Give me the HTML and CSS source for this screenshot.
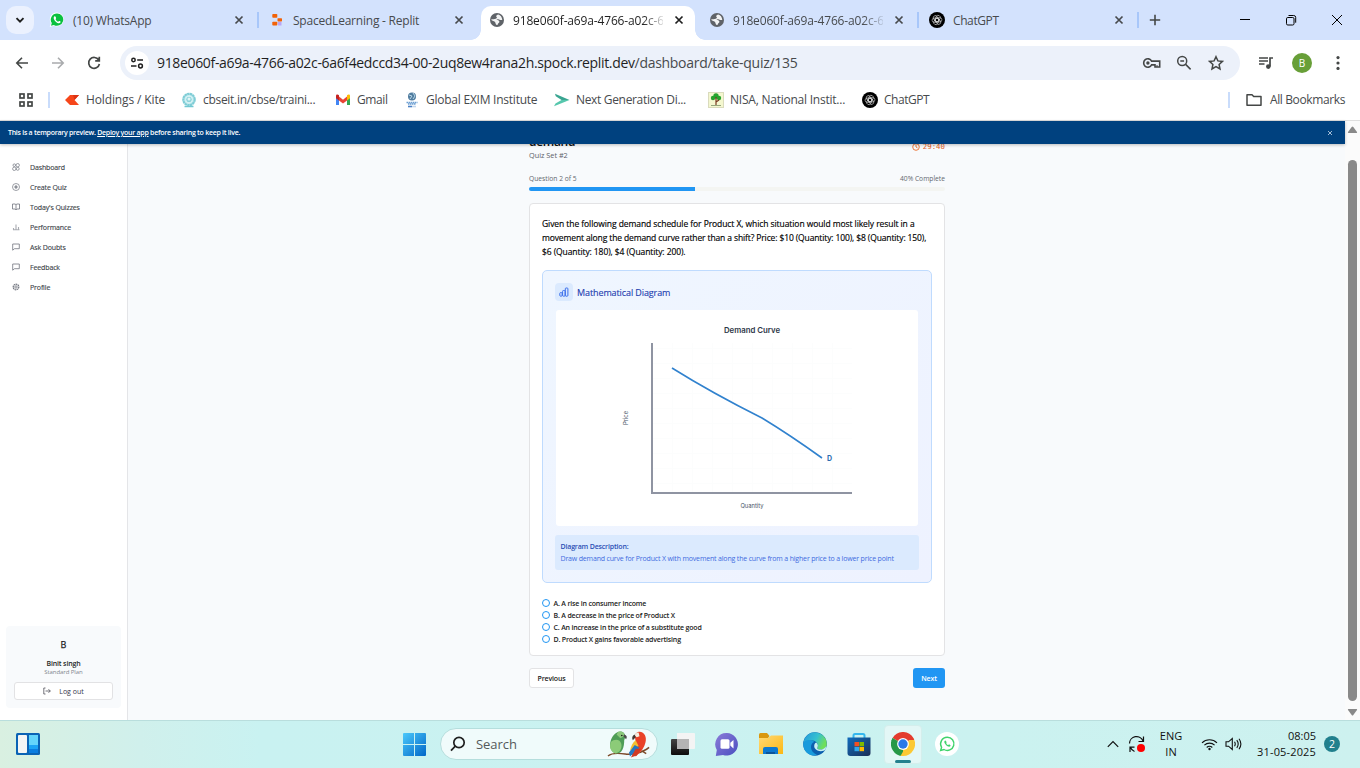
FILE: index.html
```html
<!DOCTYPE html>
<html lang="en">
<head>
<meta charset="utf-8">
<title>Take quiz</title>
<link rel="stylesheet" href="styles.css">
</head>
<body>
<svg class="defs" width="0" height="0">
  <defs>
    <linearGradient id="g-win" x1="0" y1="0" x2="1" y2="1"><stop offset="0" stop-color="#4cc9fb"/><stop offset="1" stop-color="#0067c8"/></linearGradient>
    <linearGradient id="g-chat" x1="0" y1="0" x2="1" y2="1"><stop offset="0" stop-color="#8b7bd8"/><stop offset="1" stop-color="#4a4fc0"/></linearGradient>
    <linearGradient id="g-folder" x1="0" y1="0" x2="1" y2="1"><stop offset="0" stop-color="#ffd976"/><stop offset="1" stop-color="#fcb813"/></linearGradient>
    <linearGradient id="g-edge" x1="0" y1="0" x2="1" y2=".4"><stop offset="0" stop-color="#2397dc"/><stop offset=".6" stop-color="#35c1d0"/><stop offset="1" stop-color="#6fdf5c"/></linearGradient>
    <linearGradient id="g-store" x1="0" y1="0" x2="1" y2="1"><stop offset="0" stop-color="#0f6cbd"/><stop offset="1" stop-color="#1d2f55"/></linearGradient>
    <linearGradient id="g-dark" x1="0" y1="0" x2="0" y2="1"><stop offset="0" stop-color="#444"/><stop offset="1" stop-color="#0c0c0c"/></linearGradient>
    <symbol id="close" viewBox="0 0 16 16"><path d="M4.500 4.500l7 7m0-7l-7 7" fill="none" stroke="currentColor" stroke-width="1.700"/></symbol>
    <symbol id="globe" viewBox="0 0 16 16"><circle cx="8" cy="8" r="7" fill="#5f6368"/><path d="M9.300 2.400C7 3 6.600 4.600 8 5.600c-.3 1.400-1.800 1.200-3.600 1.700H2.300c0 1.900 2.500 1.400 3.700 2.600.8 1 .2 2 1.700 3.200 1.400.1.800-1.600 2-2.200.9-.5.9-1.400.2-2.100-.8-.7-1.900-.6-2.500-1.200 1.500-.5 2.700-.4 3.600.3h2.300C13 5 11.500 2.900 9.300 2.400z" fill="#fff" opacity=".92"/></symbol>
    <symbol id="gpt" viewBox="0 0 16 16"><circle cx="8" cy="8" r="8" fill="#000"/><g fill="none" stroke="#ddd" stroke-width=".6"><rect x="5.700" y="3.100" width="4.200" height="6.600" rx="2.100" transform="rotate(-30 8 8)"/><rect x="5.700" y="3.100" width="4.200" height="6.600" rx="2.100" transform="rotate(30 8 8)"/><rect x="5.700" y="3.100" width="4.200" height="6.600" rx="2.100" transform="rotate(90 8 8)"/><rect x="5.700" y="3.100" width="4.200" height="6.600" rx="2.100" transform="rotate(150 8 8)"/><rect x="5.700" y="3.100" width="4.200" height="6.600" rx="2.100" transform="rotate(210 8 8)"/><rect x="5.700" y="3.100" width="4.200" height="6.600" rx="2.100" transform="rotate(270 8 8)"/></g></symbol>
    <symbol id="comment" viewBox="0 0 8 8"><path d="M.7 1h6.600v4.700H2.500L.7 7.200z" fill="none" stroke="currentColor" stroke-width=".8"/></symbol>
  </defs>
</svg>

<header class="tabstrip">
  <button class="tab-search"><svg width="12" height="12" viewBox="0 0 12 12"><path d="M2.500 4.200L6 7.700l3.500-3.500" fill="none" stroke="#1f1f1f" stroke-width="1.900"/></svg></button>
  <div class="tab">
    <svg class="fav" viewBox="0 0 16 16"><path d="M8 .5a7 7 0 1 1-3.400 13.300L.7 15l1.200-3.800A7 7 0 0 1 8 .5z" fill="#fff"/><path d="M8 1.400a6.200 6.200 0 1 1-3.200 11.500l-2.800.8.800-2.700A6.200 6.200 0 0 1 8 1.400z" fill="#0ac13f"/><path d="M5.400 4.300c-1.600 1.600-.1 4 1.500 5.500s3.400 2.200 4.500.8c.5-.7.200-1-.9-1.500-.8-.3-.8.900-1.500.6C7.800 9.100 7 8.300 6.600 7.200c-.1-.4.700-.7.500-1.200-.4-1.400-.7-2.200-1.700-1.700z" fill="#fff"/></svg>
    <span class="tab-title">(10) WhatsApp</span><svg class="x"><use href="#close"/></svg><i class="sep"></i>
  </div>
  <div class="tab">
    <svg class="fav" viewBox="0 0 16 16"><rect x="3.300" y="2" width="5" height="3.800" rx=".8" fill="#f26207"/><rect x="8.500" y="6.200" width="4.500" height="3.200" rx=".6" fill="#f26207"/><rect x="3.300" y="9.800" width="5" height="3.800" rx=".8" fill="#f26207"/><rect x="9" y="10" width="3.500" height="3.500" fill="#b9a5f5"/></svg>
    <span class="tab-title">SpacedLearning - Replit</span><svg class="x"><use href="#close"/></svg>
  </div>
  <div class="tab active">
    <svg class="fav"><use href="#globe"/></svg>
    <span class="tab-title hash">918e060f-a69a-4766-a02c-6</span><svg class="x"><use href="#close"/></svg>
  </div>
  <div class="tab">
    <svg class="fav"><use href="#globe"/></svg>
    <span class="tab-title hash">918e060f-a69a-4766-a02c-6</span><svg class="x"><use href="#close"/></svg><i class="sep"></i>
  </div>
  <div class="tab">
    <svg class="fav"><use href="#gpt"/></svg>
    <span class="tab-title short">ChatGPT</span><svg class="x"><use href="#close"/></svg><i class="sep"></i>
  </div>
  <svg class="newtab" width="12" height="12" viewBox="0 0 12 12"><path d="M6 .8v10.400M.8 6h10.400" stroke="#444746" stroke-width="1.600"/></svg>
  <div class="wincontrols">
    <svg width="12" height="12" viewBox="0 0 12 12"><path d="M1 5.500h10" stroke="#000"/></svg>
    <svg width="12" height="12" viewBox="0 0 12 12" fill="none" stroke="#000"><rect x="1.500" y="3.500" width="7.500" height="7.500" rx="1.300"/><path d="M3.500 1.500h5.200a2 2 0 0 1 2 2v5.200"/></svg>
    <svg width="12" height="12" viewBox="0 0 12 12"><path d="M1 1l10 10M11 1L1 11" stroke="#000"/></svg>
  </div>
</header>

<section class="toolbar">
  <div class="nav-icons">
    <svg width="16" height="16" viewBox="0 0 16 16" fill="none" stroke="#444746" stroke-width="1.600"><path d="M14 8H3M8 2.800L2.800 8 8 13.200"/></svg>
    <svg width="16" height="16" viewBox="0 0 16 16" fill="none" stroke="#a9abad" stroke-width="1.600"><path d="M2 8h11M8 2.800L13.200 8 8 13.200"/></svg>
    <svg width="16" height="16" viewBox="0 0 16 16" fill="none" stroke="#444746" stroke-width="1.700"><path d="M12.700 5A5.400 5.400 0 1 0 13.400 9M13.300 1.800v4.100H9.200"/></svg>
  </div>
  <div class="omnibox">
    <span class="site"><svg width="14" height="14" viewBox="0 0 14 14" fill="none" stroke="#1f1f1f" stroke-width="1.500"><circle cx="3.500" cy="4" r="1.700"/><path d="M7.200 4H13M1 10h5.500"/><circle cx="10.500" cy="10" r="1.900"/></svg></span>
    <span class="url"><span class="host">918e060f-a69a-4766-a02c-6a6f4edccd34-00-2uq8ew4rana2h.spock.replit.dev</span><span class="path">/dashboard/take-quiz/135</span></span>
    <div class="omni-icons">
      <svg class="key" width="20" height="16" viewBox="0 0 20 16" fill="none" stroke="#444746" stroke-width="1.600"><path d="M9.600 6.100A4.200 4.200 0 1 0 9.600 9.900H13V12h4.700V6.100z"/><circle cx="5.900" cy="8" r="1.700" fill="#444746" stroke="none"/><path d="M15 10v2" stroke-width="1"/></svg>
      <svg width="16" height="16" viewBox="0 0 16 16" fill="none" stroke="#444746" stroke-width="1.500"><circle cx="6.200" cy="6" r="4.500"/><path d="M4.300 6h3.800M9.600 9.400l5 5"/></svg>
      <svg width="16" height="16" viewBox="0 0 16 16"><path d="M8 1.700l1.900 4.200 4.600.5-3.400 3.100.9 4.500-4-2.300L4 14l.9-4.500-3.400-3.100 4.600-.5z" fill="none" stroke="#444746" stroke-width="1.500"/></svg>
    </div>
  </div>
  <svg class="media" width="16" height="14" viewBox="0 0 16 14"><path d="M1 2h9M1 5h9M1 8h5.500" stroke="#444746" stroke-width="1.500"/><path d="M12 10.500V2h3" fill="none" stroke="#444746" stroke-width="1.700"/><circle cx="10.300" cy="10.600" r="2.300" fill="#444746"/></svg>
  <span class="avatar">B</span>
  <svg class="kebab" width="4" height="16" viewBox="0 0 4 16" fill="#444746"><circle cx="2" cy="2.600" r="1.600"/><circle cx="2" cy="8" r="1.600"/><circle cx="2" cy="13.400" r="1.600"/></svg>
</section>

<nav class="bookmarks">
  <svg class="apps" width="16" height="16" viewBox="0 0 16 16" fill="none" stroke="#444746" stroke-width="1.700"><rect x="2" y="2" width="4" height="4"/><rect x="10" y="2" width="4" height="4"/><rect x="2" y="10" width="4" height="4"/><rect x="10" y="10" width="4" height="4"/></svg>
  <i class="bar"></i>
  <a class="bm b1"><svg viewBox="0 0 16 16"><path d="M1 8l5-5h9L10.500 8l4.500 5H6z" fill="#f6461a"/><path d="M10.500 8L15 3H9z" fill="#dc3313"/></svg><span>Holdings / Kite</span></a>
  <a class="bm b2"><svg viewBox="0 0 16 16"><circle cx="8" cy="7.500" r="5.700" fill="#c9edf0" stroke="#7fcdd6" stroke-width="2.200" stroke-dasharray="2.400 .3"/><circle cx="8" cy="7.500" r="3.300" fill="#8ed3db" stroke="#e9fafb" stroke-width=".8"/><circle cx="8" cy="7" r="1.500" fill="#e2f6f7"/><path d="M3.500 14.500h9" stroke="#72c8d2" stroke-width="1.500"/></svg><span>cbseit.in/cbse/traini...</span></a>
  <a class="bm b3"><svg viewBox="0 0 16 16"><path d="M1 4v9h3V7z" fill="#4285f4"/><path d="M15 4v9h-3V7z" fill="#34a853"/><path d="M4 4.500l4 3.200 4-3.200v4L8 11.500 4 8.500z" fill="#ea4335"/><path d="M1 4c0-1.500 1.700-1.900 3-.7v5.200L1 6.300z" fill="#c5221f"/><path d="M15 4c0-1.500-1.700-1.900-3-.7v5.200l3-2.200z" fill="#fbbc04"/></svg><span>Gmail</span></a>
  <a class="bm b4"><svg viewBox="0 0 16 16"><circle cx="8" cy="4.500" r="4" fill="#507c9f"/><path d="M5 3l3 1-2 3m3-6l2 3-2 3" stroke="#b9d7e8" fill="none"/><path d="M2.500 10.500h11M4 12h8" stroke="#6c9fd2" stroke-width="1.400" stroke-dasharray="1.500 .5"/><path d="M4 14.500h4" stroke="#4a80c4" stroke-width="1.600"/><path d="M8 14.500h4" stroke="#c3d6ec" stroke-width="1.600"/></svg><span>Global EXIM Institute</span></a>
  <a class="bm b5"><svg viewBox="0 0 16 16"><path d="M1 1.800L15.500 8H7.500L1.800 4.300z" fill="#3aa591"/><path d="M15.500 8L0 14.200l1.500-2.700L7.500 8z" fill="#56c7ad"/></svg><span>Next Generation Di...</span></a>
  <a class="bm b6"><svg viewBox="0 0 16 16"><rect x=".5" y=".5" width="15" height="15" fill="#f4f7cf" stroke="#dadbbd"/><g fill="#25a32d"><circle cx="8" cy="4" r="2.700"/><circle cx="5" cy="6" r="2.200"/><circle cx="11" cy="6" r="2.200"/></g><path d="M8 5v8M8 10l3-2" stroke="#7b3a22" stroke-width="1.200"/><path d="M3 13.500h10" stroke="#6b8156" stroke-width=".7"/></svg><span>NISA, National Instit...</span></a>
  <a class="bm b7"><svg><use href="#gpt"/></svg><span>ChatGPT</span></a>
  <div class="all"><i class="bar"></i><svg width="18" height="16" viewBox="0 0 18 16"><path d="M2 2.800h5l1.700 1.800H16v8.600H2z" fill="none" stroke="#444746" stroke-width="1.500" stroke-linejoin="round"/></svg><span>All Bookmarks</span></div>
</nav>

<div class="viewport">
  <div class="page">
    <div class="banner"><span>This is a temporary preview. <u>Deploy your app</u> before sharing to keep it live.</span><svg width="6" height="6" viewBox="0 0 6 6"><path d="M1 1l4 4M5 1L1 5" stroke="#cddbea" stroke-width=".8"/></svg></div>
    <div class="app">
      <aside class="sidebar">
        <ul>
          <li><svg viewBox="0 0 8 8" fill="none" stroke="currentColor" stroke-width=".7"><circle cx="2.300" cy="2.200" r="1.300"/><circle cx="5.700" cy="2.200" r="1.700"/><circle cx="2.300" cy="5.800" r="1.700"/><circle cx="5.700" cy="5.800" r="1.500"/></svg><span>Dashboard</span></li>
          <li><svg viewBox="0 0 8 8" fill="none" stroke="currentColor" stroke-width=".7"><circle cx="4" cy="4" r="3.500"/><path d="M4 2.200v3.600M2.200 4h3.600" stroke-width="1.200"/></svg><span>Create Quiz</span></li>
          <li><svg viewBox="0 0 8 8" fill="none" stroke="currentColor" stroke-width=".8"><path d="M4 1.600v5.200M.5 1H3l1 .6L5 1h2.500v5H5l-1 .8L3 6H.5z"/></svg><span>Today's Quizzes</span></li>
          <li><svg viewBox="0 0 8 8" stroke="currentColor" opacity=".6"><path d="M1.500 7V5M4 7V1.500M6.500 7V4M1 6.800h6.500" stroke-width="1.100"/></svg><span>Performance</span></li>
          <li><svg><use href="#comment"/></svg><span>Ask Doubts</span></li>
          <li><svg><use href="#comment"/></svg><span>Feedback</span></li>
          <li><svg viewBox="0 0 8 8" fill="none" stroke="currentColor"><circle cx="4" cy="4" r="2.800" stroke-width="1.200" stroke-dasharray="1.600 .5"/><circle cx="4" cy="4" r="1.200" stroke-width=".8"/></svg><span>Profile</span></li>
        </ul>
        <div class="user">
          <b class="initial">B</b>
          <b class="name">Binit singh</b>
          <span class="plan">Standard Plan</span>
          <button class="logout"><svg width="8" height="8" viewBox="0 0 8 8" fill="none" stroke="#52525b" stroke-width=".8"><path d="M2.500 1H.8v6h1.700M2.500 4h4.800M5.500 2.200L7.300 4 5.500 5.800"/></svg><span>Log out</span></button>
        </div>
      </aside>
      <main class="quiz">
        <div class="col">
          <div class="quiz-head">
            <h1>demand</h1>
            <div class="timer"><svg width="8" height="8" viewBox="0 0 8 8" fill="none" stroke="#ea580c" stroke-width=".8"><circle cx="4" cy="4" r="3.300"/><path d="M4 1.800V4l1.500.9"/></svg><span>29:40</span></div>
          </div>
          <p class="set">Quiz Set #2</p>
          <div class="meta"><span>Question 2 of 5</span><span>40% Complete</span></div>
          <div class="progress"><div style="width:40%"></div></div>
          <section class="card">
            <h2><span class="q1">Given the following demand schedule for Product X, which situation would most likely result in a</span><span class="q2">movement along the demand curve rather than a shift? Price: $10 (Quantity: 100), $8 (Quantity: 150),</span><span class="q3">$6 (Quantity: 180), $4 (Quantity: 200).</span></h2>
            <div class="diagram">
              <div class="diagram-head"><i><svg width="10" height="10" viewBox="0 0 10 10" fill="none" stroke="#3b6fec" stroke-width="1"><rect x=".8" y="5.600" width="2.300" height="3.600" rx=".8"/><rect x="3.600" y="3.500" width="2.500" height="5.700" rx=".8"/><rect x="6.300" y="1" width="2.600" height="8.200" rx=".8"/></svg></i><span>Mathematical Diagram</span></div>
              <svg class="chart" width="362" height="216" viewBox="0 0 362 216">
                <path d="M116.500 33v150M136.500 33v150M156.500 33v150M176.500 33v150M196.500 33v150M216.500 33v150M236.500 33v150M256.500 33v150M276.500 33v150M96 38.500h200M96 53.500h200M96 68.500h200M96 83.500h200M96 98.500h200M96 113.500h200M96 128.500h200M96 143.500h200M96 158.500h200M96 173.500h200" stroke="#fcfdfd" fill="none"/>
                <path d="M96 33v150h200" fill="none" stroke="#8f94a2" stroke-width="2"/>
                <path d="M116 58Q156 83 206 108Q234 125 266 148" fill="none" stroke="#3182ce" stroke-width="1.600"/>
                <text x="196" y="22.500" text-anchor="middle" class="c-title">Demand Curve</text>
                <text x="271" y="151.300" class="c-d">D</text>
                <text x="196" y="198" text-anchor="middle" class="c-axis">Quantity</text>
                <text x="71.500" y="108" text-anchor="middle" class="c-axis" transform="rotate(-90 71.500 108)">Price</text>
              </svg>
              <div class="desc"><b>Diagram Description:</b><span>Draw demand curve for Product X with movement along the curve from a higher price to a lower price point</span></div>
            </div>
            <ul class="options">
              <li><i></i><span>A. A rise in consumer income</span></li>
              <li><i></i><span>B. A decrease in the price of Product X</span></li>
              <li><i></i><span>C. An increase in the price of a substitute good</span></li>
              <li><i></i><span>D. Product X gains favorable advertising</span></li>
            </ul>
          </section>
          <div class="actions"><button class="prev">Previous</button><button class="next">Next</button></div>
        </div>
      </main>
    </div>
  </div>
  <div class="scrollbar"><svg width="11" height="8" viewBox="0 0 11 8"><path d="M4.700 1Q5.500 0 6.300 1L10 6q.5 1-.5 1h-8Q.5 7 1 6z" fill="#898989"/></svg><i></i><svg width="11" height="8" viewBox="0 0 11 8"><path d="M4.700 7Q5.500 8 6.300 7L10 2q.5-1-.5-1h-8Q.5 1 1 2z" fill="#898989"/></svg></div>
</div>

<footer class="taskbar">
  <svg class="widgets" width="24" height="22" viewBox="0 0 24 22"><rect width="24" height="22" rx="1.500" fill="#0b63b5"/><rect x="2" y="2" width="9" height="18" rx="1" fill="#f5f5f5"/><path d="M13 2h9v10h-9z" fill="#63d5fb"/><path d="M13 12h9v4h-9z" fill="#1ba4f5"/><path d="M13 16h9v4h-9z" fill="#0a7de0"/></svg>
  <div class="center">
    <svg class="win" width="23" height="23" viewBox="0 0 23 23" fill="url(#g-win)"><path d="M1 0h10v11H0V1q0-1 1-1zM12 0h10q1 0 1 1v10H12zM0 12h11v11H1q-1 0-1-1zM12 12h11v10q0 1-1 1H12z"/></svg>
    <div class="search">
      <svg width="16" height="16" viewBox="0 0 16 16" fill="none" stroke="#1f1f1f" stroke-width="1.700"><circle cx="9" cy="6.500" r="5.200"/><path d="M5.300 10.200L1 14.600"/></svg>
      <span>Search</span>
      <svg class="parrots" width="44" height="28" viewBox="0 0 46 28"><path d="M1 26.500c5-4 12-3 18-2s18-1 25-7M36 21l5 3" fill="none" stroke="#7c4a2a" stroke-width="1.500"/><path d="M4 10C6 4 11 0 15 1c4 1 5 5 3 9 0 7-2 14-8 14-6-1-8-8-6-14z" fill="#4e9d56"/><path d="M4 12c4-4 10-3 11 2s-2 9-6 10c-5-2-7-6-5-12z" fill="#8ccb78"/><path d="M12 1c5 0 7 2 6 5l-4 2-4-4z" fill="#8bc97b"/><path d="M18 4q4 1 2 5l-3-3z" fill="#4c4b4b"/><circle cx="15.500" cy="5" r=".8" fill="#111"/><path d="M29 6c0-4 5-6 8-4 5 3 4 10 2 14-2 5-6 8-9 11l-2-5c3-6 2-11 1-16z" fill="#e94228"/><path d="M30 10c-3 2-5 6-6 11l9-5z" fill="#f5bf32"/><path d="M29 15l-6 8 1 4 10-9z" fill="#2378c4"/><path d="M30 19l-5 9 6-2 5-7z" fill="#cf3a25"/><path d="M29 5q1-3 4-3l1 4-3 1z" fill="#f5efe2"/><path d="M29 4q-4 2-2 6l3-3z" fill="#423832"/></svg>
    </div>
    <div class="dock">
      <svg viewBox="0 0 24 24"><rect x="0" y="7" width="18" height="16" rx="1" fill="url(#g-dark)"/><path d="M6 1h17q1 0 1 1v14q0 1-1 1H6z" fill="#f4f4f4"/><path d="M6 7h12v10H6z" fill="#b4b4b4"/></svg>
      <svg viewBox="0 0 24 24"><path d="M12 1a11.300 11.300 0 1 1-4 22L.8 24l1-6A11.300 11.300 0 0 1 12 1z" fill="url(#g-chat)"/><rect x="5.500" y="7.300" width="9" height="9.500" rx="1.500" fill="#fff"/><path d="M15.300 10.700L18.500 8v8.400l-3.200-2.800z" fill="#fff"/></svg>
      <svg viewBox="0 0 24 24"><path d="M0 2.500Q0 1 1.500 1H8l2.500 3-2 3H0z" fill="#d9970e"/><path d="M0 6h9l3-2.500h12V22H0z" fill="url(#g-folder)"/><path d="M4 22v-5q0-2 2-2h11q2 0 2 2v5z" fill="#0b79d0"/><path d="M7 20h9v2H7z" fill="#0a559b"/></svg>
      <svg viewBox="0 0 24 24"><circle cx="12" cy="12" r="11.800" fill="#0c5fae"/><path d="M.4 10A11.800 11.800 0 0 1 23.800 12c0 4-4 6-7.500 5.500-2-.3-2.600-1-1.700-2.500 1.800-5-5-8.500-9.500-5.500C2.500 11.200 1 11 .4 10z" fill="url(#g-edge)"/><path d="M.2 12C1 7 9 7 11.500 10 6.500 11 6.500 20 14 22.500 8 26 0 20 .2 12z" fill="#199bdc"/><path d="M14.600 15c-.9 1.500-.3 2.200 1.700 2.500 2.700.3 5-.5 7-3.300l-.7 3.600c-2 1.700-8 2.700-11-1.800-1-2.500 0-5 1.500-5.500q2.500 2 1.500 4.500z" fill="#c9f1f3"/></svg>
      <svg viewBox="0 0 24 24"><path d="M6.500 7V3.500Q6.500 2 8 2h8q1.500 0 1.500 1.500V7" fill="none" stroke="#35b7ee" stroke-width="2"/><path d="M.5 5.500h23V21q0 3-3 3h-17q-3 0-3-3z" fill="url(#g-store)"/><path d="M7.500 10H12v4.300H7.500z" fill="#f25022"/><path d="M12.500 10H17v4.300h-4.500z" fill="#7fba00"/><path d="M7.500 15H12v4.200H7.500z" fill="#2ea8ec"/><path d="M12.500 15H17v4.200h-4.500z" fill="#ffb900"/></svg>
      <span class="current"><svg viewBox="0 0 24 24"><path d="M12 12L1.600 6A12 12 0 0 1 22.400 6z" fill="#e33b2e"/><path d="M12 12L22.400 6A12 12 0 0 1 12 24z" fill="#fcc934"/><path d="M12 12v12A12 12 0 0 1 1.600 6z" fill="#279847"/><path d="M12 6h10.400l.8 2H12z" fill="#e33b2e"/><path d="M17.200 15L12 24h-2.500l4-7z" fill="#fcc934"/><path d="M6.800 15L1.600 6l-1 2.500 4 7z" fill="#279847"/><circle cx="12" cy="12" r="5.900" fill="#fff"/><circle cx="12" cy="12" r="4.700" fill="#2a78e8"/></svg><i></i></span>
      <svg viewBox="0 0 24 24"><circle cx="12" cy="12" r="12" fill="#fff"/><path d="M12.300 5.200a6.600 6.600 0 1 1-3.300 12.300l-3.400 1 1-3.200A6.600 6.600 0 0 1 12.300 5.200z" fill="none" stroke="#3fd36b" stroke-width="1.400"/><path d="M10 8.500c-1.500 1-.5 3 1 4.500s3.400 2.500 4.500 1c.5-.9-1.500-1.800-2-1.300-.7.800-2.400-.7-2.100-1.700.5-.7-.4-2.600-1.400-2.500z" fill="#3fd36b"/></svg>
    </div>
  </div>
  <div class="tray">
    <svg class="chev" width="12" height="8" viewBox="0 0 12 8"><path d="M.8 6.800L6 1.600l5.200 5.200" fill="none" stroke="#111" stroke-width="1.200"/></svg>
    <svg class="sync" width="18" height="18" viewBox="0 0 18 18" fill="none" stroke="#111" stroke-width="1.200"><path d="M1.500 8.500A7 7 0 0 1 15 6M15.500 1.500V6.500H10.500M6.500 16.500A7 7 0 0 1 2.500 12.500M2 17v-4.800h4.500"/><circle cx="13" cy="13" r="4" fill="#f00" stroke="none"/></svg>
    <span class="lang"><span>ENG</span><span>IN</span></span>
    <svg class="wifi" width="17" height="13" viewBox="0 0 17 13" fill="none" stroke="#111" stroke-width="1.100"><path d="M1 4.800a10.600 10.600 0 0 1 15 0M3.400 7.200a7.200 7.200 0 0 1 10.200 0M5.700 9.500a4 4 0 0 1 5.600 0"/><circle cx="8.500" cy="11" r="1.200" fill="#111" stroke="none"/></svg>
    <svg class="vol" width="17" height="14" viewBox="0 0 17 14" fill="none" stroke="#111" stroke-width="1.100"><path d="M1 4.800h2.500L7.300 1.500v11L3.500 9.200H1zM9.500 4.800q1.500 2.200 0 4.400M11.800 3.200q2.800 3.800 0 7.600M14 1.800q3.800 5.200 0 10.400"/></svg>
    <span class="clock"><span>08:05</span><span class="date">31-05-2025</span></span>
    <span class="count">2</span>
  </div>
</footer>
</body>
</html>
```
FILE: styles.css
```css
* { box-sizing: border-box; margin: 0; padding: 0; }
body { width: 1360px; height: 768px; overflow: hidden; display: flex; flex-direction: column; font-family: "Open Sans", "Noto Sans", sans-serif; background: #fff; color: #1f1f1f; }
ul { list-style: none; }
svg { display: block; flex: none; }
span, b, a { white-space: nowrap; }
button { font-family: inherit; }
.defs { position: absolute; }

/* tab strip */
.tabstrip { height: 40px; flex: none; background: #d3e2fd; display: flex; align-items: center; padding-left: 6px; }
.tab-search { width: 28px; height: 28px; border: 0; border-radius: 10px; background: #ebf1fe; display: flex; align-items: center; justify-content: center; margin-right: 7px; }
.tab { width: 220px; height: 40px; display: flex; align-items: center; padding-left: 7px; flex: none; }
.tab .fav { width: 16px; height: 16px; margin: 0 8px 0 1px; }
.tab-title { width: 150px; font-size: 12px; line-height: 18px; padding-top: 1px; color: #474a4d; margin-right: 8px; letter-spacing: -.22px; }
.short { letter-spacing: -.4px; }
.hash { letter-spacing: -.16px; -webkit-mask-image: linear-gradient(90deg, #000 130px, rgba(0,0,0,.15) 150px); mask-image: linear-gradient(90deg, #000 130px, rgba(0,0,0,.15) 150px); }
.x { width: 16px; height: 16px; color: #474a4d; }
.sep { width: 2px; height: 16px; background: #a8c7fa; margin-left: 10px; }
.tab.active { width: 214px; height: 34px; margin: 6px 6px 0 0; background: #fff; border-radius: 10px 10px 0 0; position: relative; padding-bottom: 6px; }
.tab.active::before, .tab.active::after { content: ""; position: absolute; bottom: 0; width: 10px; height: 10px; }
.tab.active::before { left: -10px; background: radial-gradient(circle at 0 0, transparent 9.500px, #fff 10px); }
.tab.active::after { right: -10px; background: radial-gradient(circle at 100% 0, transparent 9.500px, #fff 10px); }
.tab.active .tab-title, .tab.active .x { color: #1f1f1f; }
.newtab { margin-left: 8px; }
.wincontrols { margin-left: auto; display: flex; gap: 34px; padding-right: 17px; }

/* toolbar */
.toolbar { height: 46px; flex: none; display: flex; align-items: center; background: #fff; }
.nav-icons { display: flex; gap: 20px; padding-left: 14px; width: 120px; }
.omnibox { width: 1120px; height: 34px; border-radius: 17px; background: #ecf1fa; display: flex; align-items: center; padding-left: 5px; flex: none; }
.site { width: 24px; height: 24px; border-radius: 12px; background: #fff; display: flex; align-items: center; justify-content: center; margin-right: 8px; }
.url { font-size: 14px; color: #474a4d; padding-bottom: 2px; }
.host { color: #1f1f1f; letter-spacing: -.34px; }
.path { letter-spacing: -.29px; }
.omni-icons { margin-left: auto; display: flex; gap: 16px; align-items: center; padding-right: 16px; }
.key { margin-right: -2px; }
.media { margin-left: 18px; }
.avatar { width: 20px; height: 20px; border-radius: 10px; background: #689f38; color: #fff; font-size: 10px; line-height: 20px; text-align: center; margin-left: 18px; }
.kebab { margin-left: 24px; }

/* bookmarks */
.bookmarks { height: 35px; flex: none; display: flex; align-items: center; padding: 0 15px 7px 18px; border-bottom: 1px solid #dfdfdf; font-size: 12px; color: #474a4d; }
.bookmarks .bar { width: 2px; height: 16px; background: #c9dcfb; }
.apps { margin-right: 14px; }
.bm { display: flex; align-items: center; gap: 6px; margin-left: 16px; height: 18px; }
.bm svg { width: 16px; height: 16px; }
.bm span { line-height: 18px; }
.b1 { width: 101px; margin-left: 14px; letter-spacing: -.13px; }
.b2 { width: 138px; letter-spacing: -.3px; }
.b3 { width: 53px; letter-spacing: -.4px; }
.b4 { width: 134px; letter-spacing: -.24px; }
.b5 { width: 138px; letter-spacing: -.33px; }
.b6 { width: 138px; letter-spacing: -.23px; }
.b7 { letter-spacing: -.45px; }
.all { margin-left: auto; display: flex; align-items: center; letter-spacing: -.38px; }
.all svg { margin: 0 7px 0 15px; }

/* viewport */
.viewport { height: 599px; flex: none; display: flex; }
.page { width: 1345px; height: 599px; display: flex; flex-direction: column; background: #f8fafc; }
.banner { height: 23px; flex: none; background: #00417f; color: #fff; font-size: 7px; font-weight: 600; display: flex; align-items: center; justify-content: space-between; padding: 0 12px 0 8px; box-shadow: 0 1px 3px rgba(0,0,0,.25); position: relative; z-index: 2; letter-spacing: -.27px; }
.app { flex: 1; min-height: 0; display: flex; overflow: hidden; }
.sidebar { width: 128px; background: #fff; border-right: 1px solid #e4e5e8; padding: 13px 6px 12px; display: flex; flex-direction: column; justify-content: space-between; }
.sidebar li { height: 20px; display: flex; align-items: center; gap: 10px; padding-left: 6px; font-size: 7px; font-weight: 500; color: #3a3f47; letter-spacing: -.13px; -webkit-text-stroke: .12px currentColor; }
.sidebar li svg { width: 8px; height: 8px; color: #71757f; }
.user { height: 82px; background: #f8fafc; border-radius: 4px; display: flex; flex-direction: column; align-items: center; padding-top: 11px; }
.initial { font-size: 9px; line-height: 15px; font-weight: 500; -webkit-text-stroke: .25px currentColor; }
.name { font-size: 7px; line-height: 9px; margin-top: 7px; font-weight: 600; letter-spacing: -.15px; }
.plan { font-size: 6px; line-height: 8px; color: #80858d; letter-spacing: -.07px; }
.logout { width: 99px; height: 18px; margin-top: 6px; background: #fff; border: 1px solid #e2e2e4; border-radius: 3px; font-size: 7px; display: flex; align-items: center; justify-content: center; gap: 8px; color: #33364a; font-weight: 500; }
.quiz { flex: 1; padding-left: 401px; overflow: hidden; }
.col { width: 416px; }
.quiz-head { display: flex; justify-content: space-between; height: 16px; margin-top: -10px; }
h1 { font-size: 12px; line-height: 15px; color: #111; font-weight: 600; letter-spacing: -.3px; }
.timer { display: flex; align-items: center; gap: 3px; height: 10px; margin-top: 8px; font: 7.400px/10px "DejaVu Sans Mono", monospace; color: #e0601f; }
.set { font-size: 7.300px; line-height: 10px; color: #5c6068; }
.meta { display: flex; justify-content: space-between; font-size: 6.700px; line-height: 10px; margin-top: 14px; color: #64686f; }
.progress { height: 4px; border-radius: 2px; background: #f4f5f2; margin-top: 3px; overflow: hidden; }
.progress div { height: 4px; background: #2196f3; }
.card { height: 453px; margin-top: 12px; background: #fff; border: 1px solid #e3e3e5; border-radius: 4px; padding: 13px 12px 0; }
h2 { font-size: 8.500px; line-height: 14px; font-weight: 500; color: #000; -webkit-text-stroke: .15px #000; }
h2 span { display: block; width: max-content; }
.q1 { letter-spacing: -.075px; }
.q2 { letter-spacing: -.125px; }
.q3 { letter-spacing: -.09px; }
.diagram { height: 313px; margin-top: 11px; border: 1px solid #bfdbfe; border-radius: 5px; background: linear-gradient(135deg, #eff6ff, #eef2ff); padding: 12px; }
.diagram-head { display: flex; align-items: center; gap: 4px; font-size: 9px; height: 18px; color: #1e40af; font-weight: 500; letter-spacing: -.1px; -webkit-text-stroke: .12px currentColor; }
.diagram-head i { width: 18px; height: 18px; border-radius: 4px; background: #dbeafe; display: flex; align-items: center; justify-content: center; }
.chart { margin: 9px 0 0 1px; background: #fff; border-radius: 3px; }
.c-title { font: 600 7.800px Inter, sans-serif; fill: #2d3748; }
.c-d { font: 700 7px Inter, sans-serif; fill: #2b6cb0; }
.c-axis { font: 5.800px Inter, sans-serif; fill: #4a5568; }
.desc { height: 35px; margin-top: 9px; border-radius: 3px; background: #dbeafe; padding: 6px 5.500px; display: flex; flex-direction: column; font-size: 7px; line-height: 12px; color: #3f6ade; letter-spacing: -.17px; }
.desc b { color: #2b4fb5; font-weight: 600; }
.options { margin-top: 14px; }
.options li { height: 12px; display: flex; align-items: center; gap: 3.500px; font-size: 7px; font-weight: 600; color: #222; letter-spacing: -.18px; }
.options i { width: 8px; height: 8px; border: 1px solid #2196f3; border-radius: 4px; }
.actions { display: flex; justify-content: space-between; margin-top: 12px; }
.actions button { height: 20px; border-radius: 3px; font-size: 7px; font-weight: 600; letter-spacing: -.15px; }
.prev { width: 45px; background: #fff; border: 1px solid #e3e3e5; color: #222; }
.next { width: 32px; background: #2196f3; border: 0; color: #fff; }
.scrollbar { width: 15px; background: #fbfbfb; display: flex; flex-direction: column; align-items: center; padding: 5px 0 4px; }
.scrollbar i { width: 9px; height: 541px; border-radius: 5px; background: #898989; margin: 26px 0 7px; }

/* taskbar */
.taskbar { height: 48px; flex: none; background: linear-gradient(90deg, #d9f0e1, #d0f0ec 140px, #c9f2f1 260px, #cbf2f0 1000px, #cdf1ef); border-top: 1px solid #b9dedd; display: flex; align-items: center; }
.widgets { margin: 0 0 1px 16px; }
.center { display: flex; align-items: center; margin-left: 363px; height: 47px; padding-bottom: 1px; }
.search { width: 218px; height: 32px; border-radius: 16px; background: #f0fbfb; border: 1px solid #b5dedd; display: flex; align-items: center; padding: 0 6px 0 9px; margin-left: 14px; color: #55595a; }
.search span { margin-left: 10px; font-size: 13px; letter-spacing: -.05px; }
.parrots { margin-left: auto; }
.dock { display: flex; align-items: center; gap: 20px; margin-left: 13px; }
.dock svg { width: 24px; height: 24px; }
.current { width: 38px; height: 39px; margin: 0 -7px; border-radius: 4px; background: #e3f7f6; border: 1px solid #d4eeec; display: flex; flex-direction: column; align-items: center; padding-top: 6px; }
.current i { width: 16px; height: 3px; border-radius: 2px; background: #23808e; margin-top: 4px; }
.tray { margin-left: auto; display: flex; align-items: center; font-size: 11px; color: #111; padding: 0 20px 1px 0; height: 47px; }
.sync { margin-left: 9px; }
.lang { display: flex; flex-direction: column; align-items: center; line-height: 16px; width: 24px; margin-left: 13px; }
.wifi { margin-left: 18px; }
.vol { margin-left: 7px; }
.clock { display: flex; flex-direction: column; align-items: flex-end; line-height: 16px; width: 60px; margin-left: 14px; }
.date { letter-spacing: .15px; }
.count { width: 16px; height: 16px; border-radius: 8px; background: #21808d; color: #fff; font-size: 10.500px; line-height: 16px; text-align: center; margin-left: 8px; }
```
